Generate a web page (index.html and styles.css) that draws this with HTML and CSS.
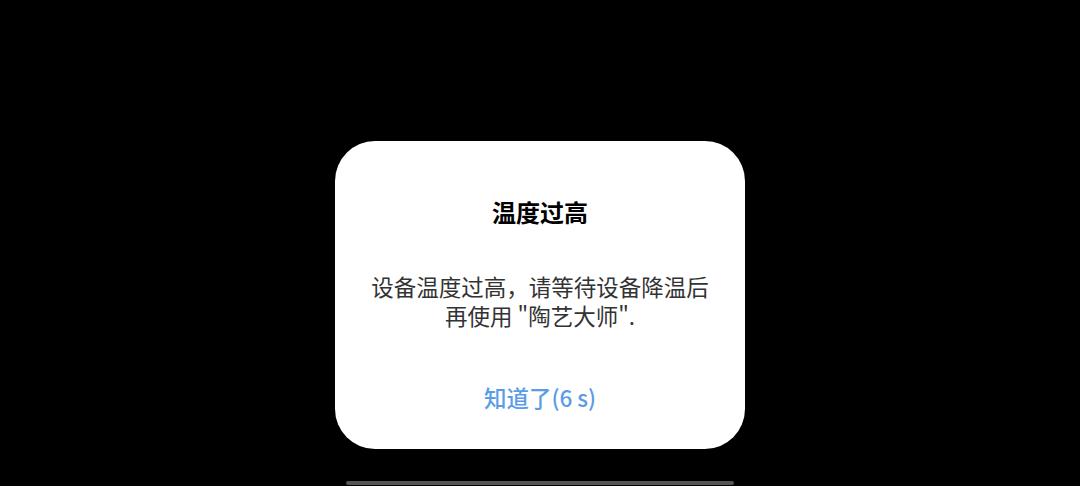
FILE: index.html
```html
<!DOCTYPE html>
<html lang="zh-CN">
<head>
<meta charset="utf-8">
<link rel="stylesheet" href="styles.css">
</head>
<body>
<div class="screen">
  <div class="dialog">
    <div class="title">温度过高</div>
    <div class="message">设备温度过高，请等待设备降温后再使用 "陶艺大师".</div>
    <div class="action">知道了(6 s)</div>
  </div>
  <div class="home-bar"></div>
</div>
</body>
</html>
```
FILE: styles.css
```css
html, body {
  margin: 0;
  padding: 0;
  background: #000;
}
.screen {
  width: 1080px;
  height: 486px;
  display: flex;
  flex-direction: column;
  align-items: center;
  font-family: "Noto Sans CJK SC", "Noto Sans", sans-serif;
}
.dialog {
  margin-top: 141px;
  width: 410px;
  height: 308px;
  box-sizing: border-box;
  background: #fff;
  border-radius: 40px;
  padding: 55px 30px 0;
  display: flex;
  flex-direction: column;
  align-items: center;
  text-align: center;
}
.title {
  font-size: 24px;
  line-height: 32px;
  font-weight: 700;
  color: #000;
}
.message {
  margin-top: 44px;
  font-size: 22.5px;
  line-height: 29px;
  color: #333;
}
.action {
  margin-top: 52px;
  font-size: 22.5px;
  line-height: 30px;
  font-weight: 500;
  color: #5b9ce8;
}
.home-bar {
  margin-top: 32px;
  width: 388px;
  height: 4px;
  border-radius: 2px;
  background: #555;
}
```
